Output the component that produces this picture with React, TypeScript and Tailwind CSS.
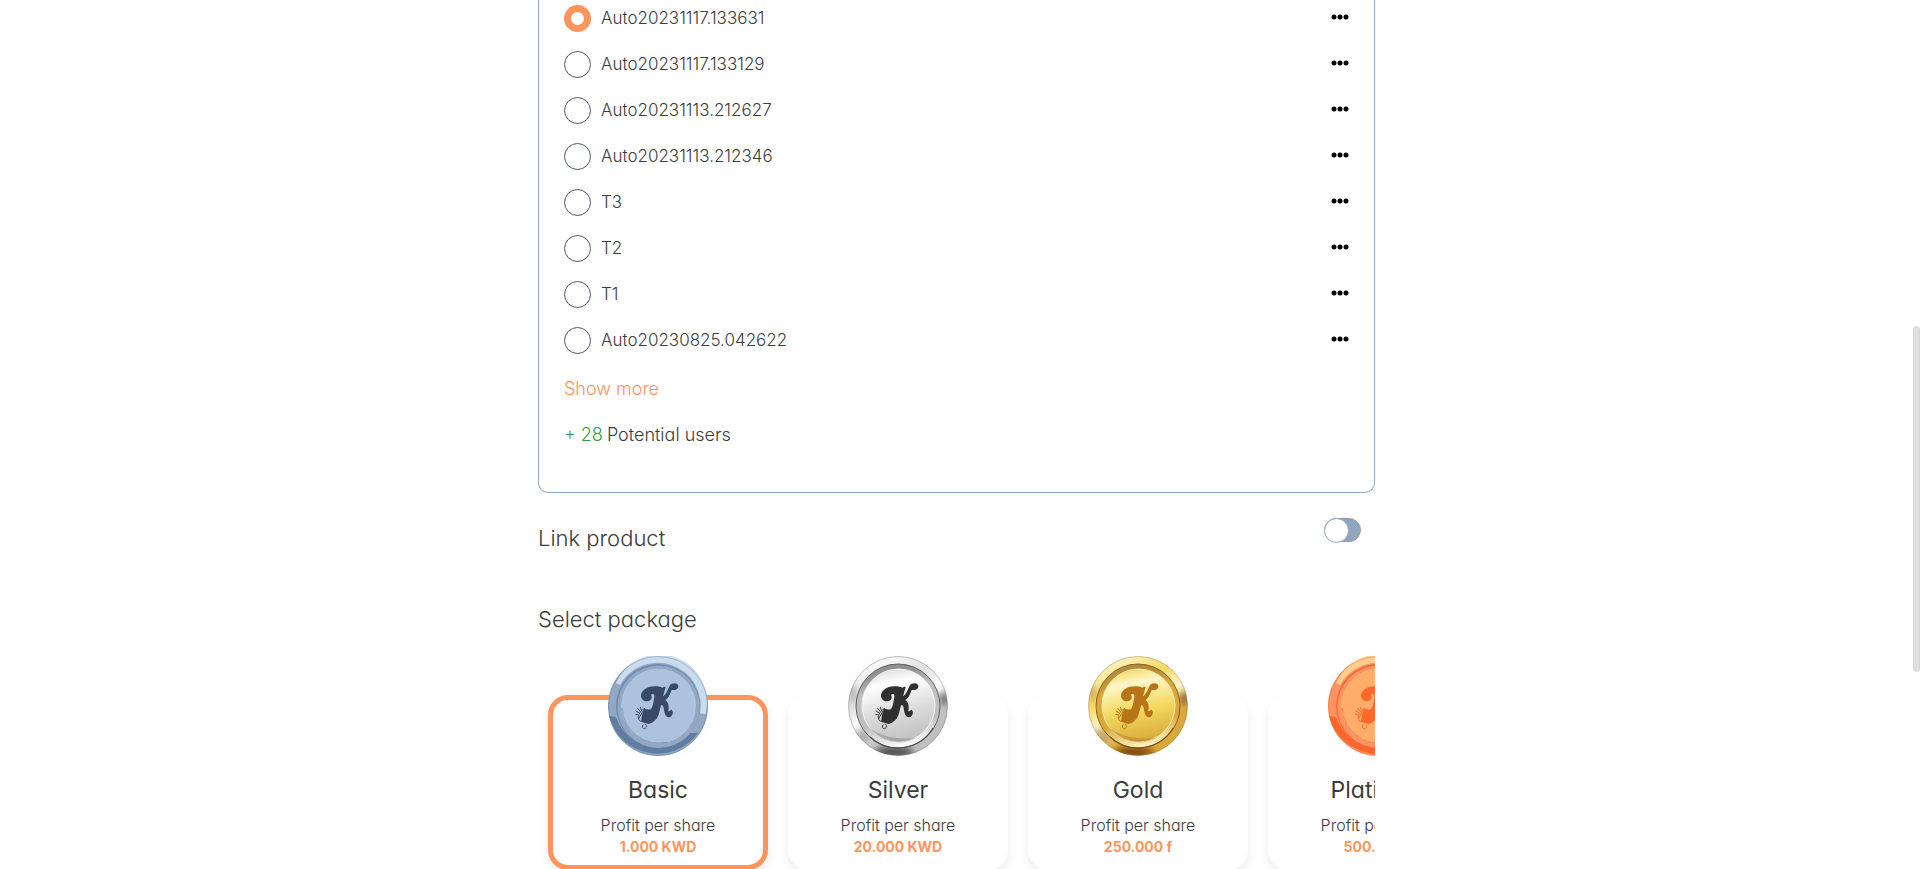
import { useState } from "react";

const users = [
  "Auto20231117.133631",
  "Auto20231117.133129",
  "Auto20231113.212627",
  "Auto20231113.212346",
  "T3",
  "T2",
  "T1",
  "Auto20230825.042622",
];

type Tone = {
  kind: "flat" | "metal";
  base: string;
  light: string;
  dark: string;
  rim: string;
  face: string;
  mark: string;
};

const packages: { name: string; profit: string; tone: Tone }[] = [
  {
    name: "Basic",
    profit: "1.000 KWD",
    tone: { kind: "flat", base: "#92a8c2", light: "#cadbec", dark: "#607da1", rim: "#6f8aad", face: "#adc3dd", mark: "#3a4a66" },
  },
  {
    name: "Silver",
    profit: "20.000 KWD",
    tone: { kind: "metal", base: "#c0c0c0", light: "#ffffff", dark: "#4a4a4a", rim: "#4d4d4d", face: "#dedede", mark: "#303030" },
  },
  {
    name: "Gold",
    profit: "250.000 f",
    tone: { kind: "metal", base: "#d8a93a", light: "#fff6c8", dark: "#7a4210", rim: "#80500f", face: "#f3da62", mark: "#b87518" },
  },
  {
    name: "Platinum",
    profit: "500.000 f",
    tone: { kind: "flat", base: "#fb9460", light: "#ffce90", dark: "#fa662c", rim: "#f56a35", face: "#ffad68", mark: "#fb6a29" },
  },
];

function Coin({ id, tone }: { id: string; tone: Tone }) {
  return (
    <svg viewBox="0 0 100 100" className="relative z-10 size-[100px]" aria-hidden="true">
      <defs>
        <linearGradient id={`${id}-rim`} x1="0.2" y1="0.05" x2="0.7" y2="1">
          <stop offset="0" stopColor={tone.light} />
          <stop offset="0.3" stopColor={tone.face} />
          <stop offset="0.5" stopColor={tone.light} />
          <stop offset="0.75" stopColor={tone.base} />
          <stop offset="1" stopColor={tone.base} />
        </linearGradient>
        <linearGradient id={`${id}-ring`} x1="0.35" y1="0" x2="0.55" y2="1">
          <stop offset="0" stopColor={tone.rim} stopOpacity="0.6" />
          <stop offset="0.3" stopColor={tone.base} />
          <stop offset="0.7" stopColor={tone.base} />
          <stop offset="1" stopColor={tone.light} />
        </linearGradient>
        <linearGradient id={`${id}-face`} x1="0.35" y1="0" x2="0.55" y2="1">
          <stop offset="0" stopColor={tone.face} />
          <stop offset="0.2" stopColor={tone.light} />
          <stop offset="0.55" stopColor={tone.face} />
          <stop offset="1" stopColor={tone.base} />
        </linearGradient>
        <clipPath id={`${id}-clip`}>
          <circle cx="50" cy="50" r="49.5" />
        </clipPath>
        <filter id={`${id}-soft`} x="-50%" y="-50%" width="200%" height="200%">
          <feGaussianBlur stdDeviation="3" />
        </filter>
      </defs>
      {tone.kind === "flat" ? (
        <>
          <circle cx="50" cy="50" r="50" fill={tone.base} />
          <path d="M8 27A47.500 47.500 0 0 1 97.500 58L92 57.500A43 43 0 0 0 12 29Z" fill={tone.light} />
          <path d="M1 60A50 50 0 0 0 90 77L78 77A42 42 0 0 1 8 61Z" fill={tone.dark} />
          <circle cx="50" cy="50" r="49.5" fill="none" stroke={tone.dark} strokeOpacity="0.4" strokeWidth="1" />
          <circle cx="50" cy="50" r="42" fill={tone.rim} />
          <circle cx="50.600" cy="50.800" r="41.200" fill={tone.base} />
          <circle cx="50.500" cy="50" r="37" fill={tone.face} />
          <circle cx="50.500" cy="50" r="37" fill="none" stroke={tone.light} strokeOpacity="0.7" strokeWidth="0.600" strokeDasharray="18 3 8 2" />
          <path d="M14 52A37 37 0 0 0 60 86" fill="none" stroke={tone.rim} strokeOpacity="0.8" strokeWidth="0.800" />
        </>
      ) : (
        <>
          <circle cx="50" cy="50" r="49.5" fill={`url(#${id}-rim)`} />
          <g clipPath={`url(#${id}-clip)`}>
            <g filter={`url(#${id}-soft)`} fill={tone.dark}>
              <ellipse cx="96" cy="43" rx="4" ry="7" fillOpacity="0.85" />
              <ellipse cx="4" cy="37" rx="5" ry="9" fillOpacity="0.3" />
              <ellipse cx="46" cy="96" rx="20" ry="5" />
              <ellipse cx="14" cy="80" rx="8" ry="8" fillOpacity="0.35" />
            </g>
          </g>
          <circle cx="50" cy="50" r="49.5" fill="none" stroke={tone.rim} strokeOpacity="0.45" strokeWidth="0.800" />
          <circle cx="50" cy="50" r="42" fill={`url(#${id}-ring)`} stroke={tone.rim} strokeOpacity="0.85" strokeWidth="1" />
          <path d="M22 81A41 41 0 0 0 85 72" fill="none" stroke={tone.rim} strokeWidth="1.200" />
          <circle cx="50.500" cy="49.500" r="36.500" fill={`url(#${id}-face)`} stroke={tone.light} strokeWidth="0.800" />
          <path d="M20 70A36.500 36.500 0 0 0 68 82C46 84 30 80 20 70Z" fill={tone.rim} fillOpacity="0.25" />
        </>
      )}
      <g transform="translate(-8 -10.7) scale(0.3333)">
        <path
          d="M188 127C170 120 142 121 129 136C116 151 126 169 142 168C155 167 158 156 153 149C158 143 165 146 163 155C160 170 160 182 153 191C147 196 141 190 133 190L126 208L123 229L146 236C160 232 170 224 175 210C179 199 180 188 184 179C191 179 191 189 193 199C196 216 208 220 215 211C220 205 220 197 214 193C210 195 208 199 205 198C207 185 207 171 196 164C208 157 210 145 215 134C225 136 236 131 235 121C231 112 216 111 209 121C203 132 200 145 189 153L197 126C194 123 191 125 188 127Z"
          fill={tone.mark}
        />
        <path
          d="M133 190C124 194 113 207 115 219C116 225 121 229 125 229M133 190L116 220M129 239C122 247 133 255 138 247C141 243 139 239 136 236M113 189L120 198M121 186L124 195M108 197L116 202M107 207L112 208"
          fill="none"
          stroke={tone.mark}
          strokeWidth="3"
          strokeLinecap="round"
        />
      </g>
    </svg>
  );
}

export default function App() {
  const [user, setUser] = useState(users[0]);
  const [selected, setSelected] = useState("Basic");
  const [linked, setLinked] = useState(false);

  return (
    <div className="flex h-screen overflow-hidden bg-white font-[Inter,'Open_Sans',sans-serif] font-light text-[#3c3c3c] [font-feature-settings:'cv11']">
      <main className="min-w-0 flex-1">
        <div className="mx-auto max-w-[837px]">
          <section aria-label="Users" className="rounded-b-[10px] border border-t-0 border-[#8fa9c6] px-[25px] pb-8">
            <ul>
              {users.map((name) => (
                <li key={name} className="flex h-[46px] items-start justify-between pt-[5px]">
                  <label className="flex items-center gap-[10px] text-[17px] leading-[27px]">
                    <input
                      type="radio"
                      name="user"
                      checked={user === name}
                      onChange={() => setUser(name)}
                      className="size-[27px] shrink-0 appearance-none rounded-full border border-[#4b566b] bg-white checked:border-[7px] checked:border-[#ff955c]"
                    />
                    {name}
                  </label>
                  <button type="button" aria-label={`Options for ${name}`} className="flex h-6 items-center text-black">
                    <svg viewBox="0 0 18 6" className="h-[6px] w-[18px]" fill="currentColor">
                      <circle cx="3" cy="3" r="2.5" />
                      <circle cx="9" cy="3" r="2.5" />
                      <circle cx="15" cy="3" r="2.5" />
                    </svg>
                  </button>
                </li>
              ))}
            </ul>
            <div className="flex h-[46px] items-center pb-1">
              <button type="button" className="text-lg text-[#ff955c]">
                Show more
              </button>
            </div>
            <p className="flex h-[46px] items-center gap-1 pb-1 text-lg">
              <span className="text-[#2f9e44]">+ 28</span>
              Potential users
            </p>
          </section>

          <div className="flex items-start justify-between pt-[25px] pr-[14px]">
            <label htmlFor="link-product" className="pt-1 text-[22px] leading-8">
              Link product
            </label>
            <span className="relative flex">
              <input
                id="link-product"
                type="checkbox"
                role="switch"
                checked={linked}
                onChange={(e) => setLinked(e.target.checked)}
                className="peer h-6 w-[37px] appearance-none rounded-full border border-[#9b9b9f] bg-[#8fa6c1] checked:bg-[#ff955c]"
              />
              <span className="pointer-events-none absolute top-0 left-0 size-[25px] rounded-full border border-[#8fa9c6] bg-white peer-checked:left-3" />
            </span>
          </div>

          <h2 className="pt-[49px] text-[22px] leading-8">Select package</h2>

          <div className="flex gap-5 overflow-hidden px-[10px] pt-[21px] pb-5">
            {packages.map(({ name, profit, tone }) => (
              <button
                key={name}
                type="button"
                aria-pressed={selected === name}
                onClick={() => setSelected(name)}
                className="group flex w-[220px] shrink-0 flex-col items-center"
              >
                <Coin id={name} tone={tone} />
                <span className="-mt-[61px] flex h-[175px] w-full flex-col items-center rounded-[20px] border-[5px] border-transparent bg-white bg-clip-border pt-[74px] shadow-[0_6px_12px_rgba(0,0,0,0.07)] group-aria-pressed:border-[#ff955c]">
                  <span className="text-[23px] leading-8 font-normal">{name}</span>
                  <span className="pt-2 text-base leading-[22px]">Profit per share</span>
                  <span className="text-sm leading-[22px] font-bold text-[#ff955c]">{profit}</span>
                </span>
              </button>
            ))}
          </div>
        </div>
      </main>
      <div className="flex w-[7px] flex-col pt-[326px]" aria-hidden="true">
        <div className="h-[346px] rounded-full border border-[#d6d6d6] bg-[#e0e0e0]" />
      </div>
    </div>
  );
}
